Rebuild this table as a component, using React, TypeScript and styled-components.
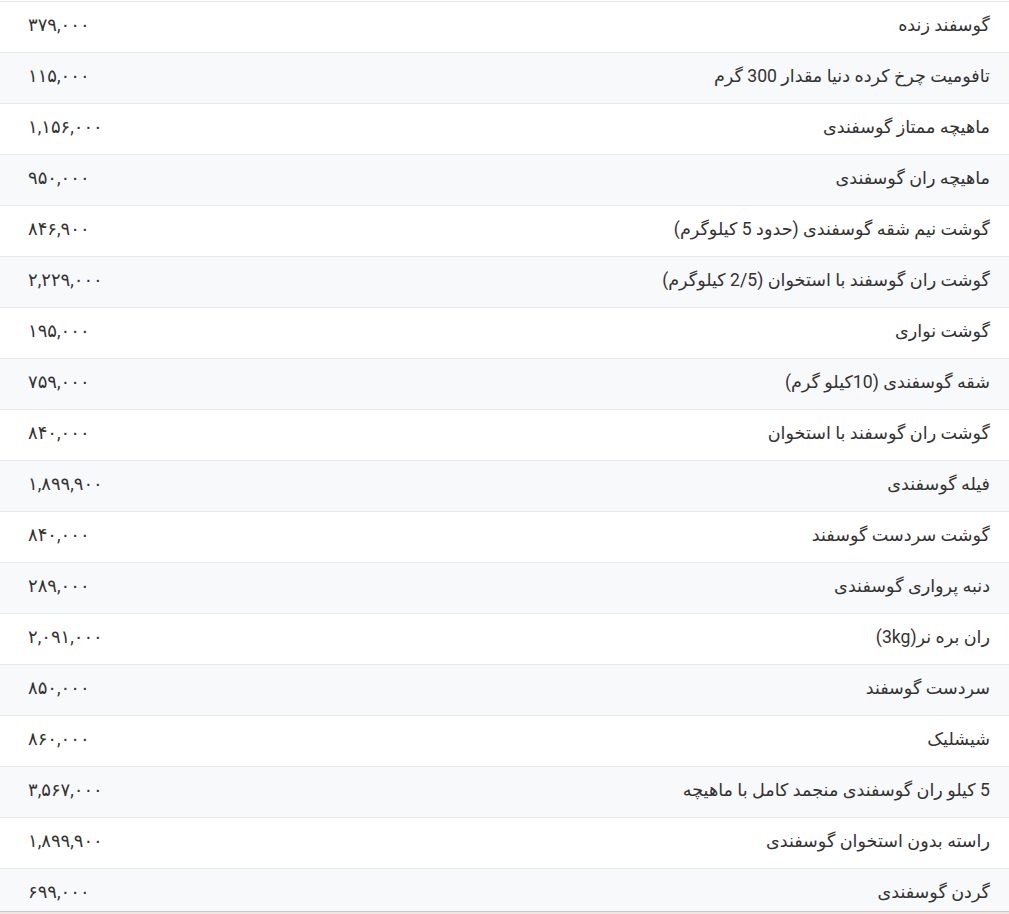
import React from "react";
import styled, { createGlobalStyle } from "styled-components";

const Global = createGlobalStyle`
  html, body { margin: 0; padding: 0; background: #ffffff; }
  body { font-family: Roboto, "DejaVu Sans", sans-serif; }
`;

const Wrapper = styled.div`
  padding-top: 1px;
  width: 1009px;
`;

const Table = styled.table`
  width: 100%;
  border-collapse: collapse;
  direction: rtl;
  font-family: Roboto, "DejaVu Sans", sans-serif;
  color: #333333;
`;

const Row = styled.tr<{ $striped: boolean }>`
  background: ${(p) => (p.$striped ? "#f8f9fb" : "#ffffff")};
  border-top: 1px solid #e7e9ec;
  height: 51px;
`;

const NameCell = styled.td`
  text-align: right;
  padding: 0 19px 5px 0;
  vertical-align: middle;
  white-space: nowrap;
  font-size: 17.6px;
`;

const PriceCell = styled.td`
  text-align: left;
  padding: 0 0 5px 28px;
  vertical-align: middle;
  width: 300px;
  white-space: nowrap;
  font-size: 18px;
`;

const BottomBar = styled.div`
  position: fixed;
  left: 0;
  right: 0;
  top: 911px;
  height: 3px;
  background: #f4e6df;
  border-top: 1px solid #cdc6cc;
  box-sizing: border-box;
`;

const items: [string, string][] = [
  ["گوسفند زنده", "۳۷۹,۰۰۰"],
  ["تافومیت چرخ کرده دنیا مقدار 300 گرم", "۱۱۵,۰۰۰"],
  ["ماهیچه ممتاز گوسفندی", "۱,۱۵۶,۰۰۰"],
  ["ماهیچه ران گوسفندی", "۹۵۰,۰۰۰"],
  ["گوشت نیم شقه گوسفندی (حدود 5 کیلوگرم)", "۸۴۶,۹۰۰"],
  ["گوشت ران گوسفند با استخوان (2/5 کیلوگرم)", "۲,۲۲۹,۰۰۰"],
  ["گوشت نواری", "۱۹۵,۰۰۰"],
  ["شقه گوسفندی (10کیلو گرم)", "۷۵۹,۰۰۰"],
  ["گوشت ران گوسفند با استخوان", "۸۴۰,۰۰۰"],
  ["فیله گوسفندی", "۱,۸۹۹,۹۰۰"],
  ["گوشت سردست گوسفند", "۸۴۰,۰۰۰"],
  ["دنبه پرواری گوسفندی", "۲۸۹,۰۰۰"],
  ["ران بره نر(3kg)", "۲,۰۹۱,۰۰۰"],
  ["سردست گوسفند", "۸۵۰,۰۰۰"],
  ["شیشلیک", "۸۶۰,۰۰۰"],
  ["5 کیلو ران گوسفندی منجمد کامل با ماهیچه", "۳,۵۶۷,۰۰۰"],
  ["راسته بدون استخوان گوسفندی", "۱,۸۹۹,۹۰۰"],
  ["گردن گوسفندی", "۶۹۹,۰۰۰"],
];

export default function App() {
  return (
    <>
      <Global />
      <Wrapper>
        <Table>
          <tbody>
            {items.map(([name, price], i) => (
              <Row key={i} $striped={i % 2 === 1}>
                <NameCell>{name}</NameCell>
                <PriceCell>{price}</PriceCell>
              </Row>
            ))}
          </tbody>
        </Table>
      </Wrapper>
      <BottomBar />
    </>
  );
}
